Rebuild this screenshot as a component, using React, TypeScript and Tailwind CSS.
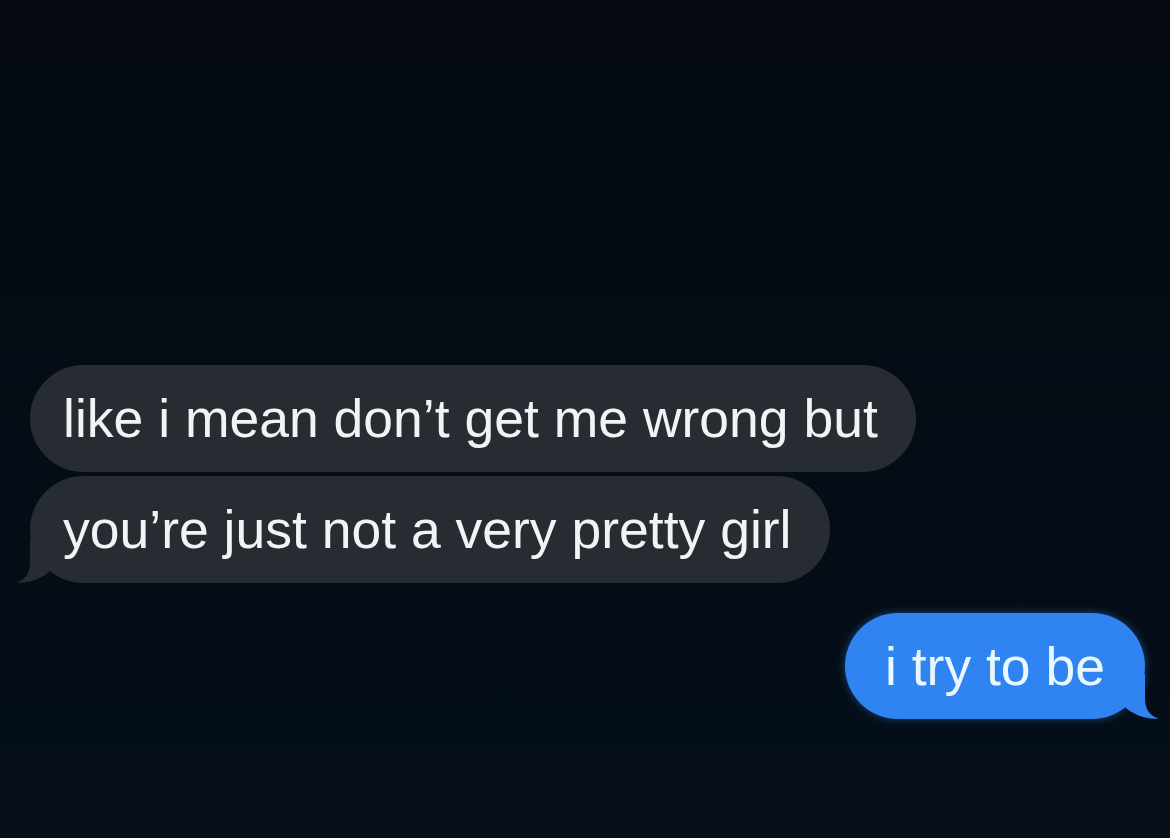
import React from 'react';

interface Message {
  text: string;
  fromMe: boolean;
  tail?: boolean;
}

const messages: Message[] = [
  { text: 'like i mean don\u2019t get me wrong but', fromMe: false },
  { text: 'you\u2019re just not a very pretty girl', fromMe: false, tail: true },
  { text: 'i try to be', fromMe: true, tail: true },
];

function Tail({ side, color }: { side: 'left' | 'right'; color: string }) {
  // iMessage style hook: straight edge down, out to the tip, back up to the notch
  return (
    <svg
      width="45"
      height="45"
      viewBox="0 0 45 45"
      className={`absolute bottom-0 ${side === 'left' ? '-left-[15px]' : '-right-[15px] -scale-x-100'}`}
    >
      <path d="M15 0 L15 24 C15 36 10 42 1 44.5 C14 45.5 27 41 36 32 L36 0 Z" fill={color} />
    </svg>
  );
}

export default function App() {
  return (
    <div
      className="w-[1170px] h-[838px] overflow-hidden bg-gradient-to-b from-[#03090f] via-[#040c15] to-[#050f19] pt-[365px]"
      style={{ fontFamily: '"Liberation Sans", Arial, sans-serif' }}
    >
      <div className="flex flex-col gap-[4px] pl-[30px]">
        {messages
          .filter(m => !m.fromMe)
          .map((m, i) => (
            <div key={i} className="flex">
              <div className="relative h-[107px] flex items-center rounded-[54px] bg-[#272c33] pl-[33px] pr-[38px]">
                {m.tail && <Tail side="left" color="#272c33" />}
                <span className="relative text-[53.5px] leading-[53px] text-[#f1f3f5] whitespace-nowrap">{m.text}</span>
              </div>
            </div>
          ))}
      </div>

      <div className="flex justify-end pr-[25px] mt-[30px]">
        {messages
          .filter(m => m.fromMe)
          .map((m, i) => (
            <div
              key={i}
              className="relative h-[106px] flex items-center rounded-[54px] bg-[#2f84f1] px-[40px] shadow-[0_0_8px_rgba(47,132,241,0.45)]"
            >
              {m.tail && <Tail side="right" color="#2f84f1" />}
              <span className="relative text-[53.5px] leading-[53px] text-[#e9f7ff] whitespace-nowrap">{m.text}</span>
            </div>
          ))}
      </div>
    </div>
  );
}
